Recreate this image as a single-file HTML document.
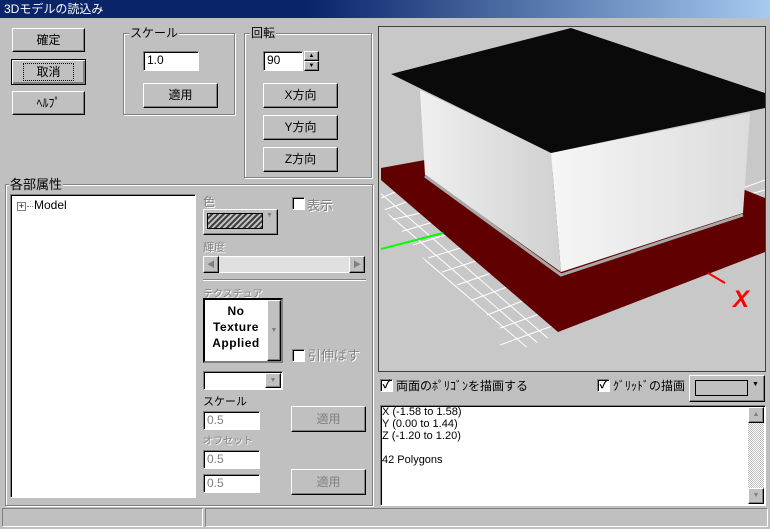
<!DOCTYPE html>
<html><head><meta charset="utf-8"><style>
*{box-sizing:border-box;margin:0;padding:0}
body{width:770px;height:529px;background:#c0c0c0;font-family:"Liberation Sans","Noto Sans CJK JP",sans-serif;font-size:12px;position:relative;overflow:hidden;color:#000}
.a{position:absolute}
.btn{position:absolute;background:#c0c0c0;border:1px solid;border-color:#fff #000 #000 #fff;box-shadow:inset -1px -1px #808080;text-align:center;font-size:12px}
.edit{position:absolute;background:#fff;border:1px solid;border-color:#808080 #fff #fff #808080;box-shadow:inset 1px 1px #000;padding-left:3px;font-size:12px;line-height:17px}
.grp{position:absolute;border:1px solid #808080;box-shadow:1px 1px #fff, inset 1px 1px #fff}
.lbl{position:absolute;background:#c0c0c0;font-size:12px;line-height:13px;padding:0 1px}
.dis{color:#808080;text-shadow:1px 1px #fff}
.cb{position:absolute;width:13px;height:13px;background:#fff;border:1px solid;border-color:#808080 #fff #fff #808080;box-shadow:inset 1px 1px #000;font-size:11px;line-height:10px;text-align:center;font-weight:bold}
</style></head><body>
<div class="a" style="left:0;top:0;width:770px;height:18px;background:linear-gradient(90deg,#0a246a,#0a246a 40%,#a6caf0);color:#fff;font-size:12px;line-height:18px;padding-left:4px">3Dモデルの読込み</div>

<div class="btn" style="left:12px;top:28px;width:73px;height:24px;line-height:22px">確定</div>
<div class="btn" style="left:11px;top:59px;width:75px;height:26px;line-height:24px;border:1px solid #000;box-shadow:inset 1px 1px #fff,inset -2px -2px #808080"><span style="border:1px dotted #000;padding:1px 12px">取消</span></div>
<div class="btn" style="left:12px;top:91px;width:73px;height:24px;line-height:22px">ﾍﾙﾌﾟ</div>

<div class="grp" style="left:123px;top:33px;width:112px;height:82px"></div>
<div class="lbl" style="left:129px;top:27px">スケール</div>
<div class="edit" style="left:143px;top:51px;width:56px;height:20px">1.0</div>
<div class="btn" style="left:143px;top:83px;width:75px;height:25px;line-height:23px">適用</div>

<div class="grp" style="left:244px;top:33px;width:128px;height:145px"></div>
<div class="lbl" style="left:250px;top:27px">回転</div>
<div class="edit" style="left:263px;top:51px;width:40px;height:20px">90</div>
<div class="btn" style="left:304px;top:51px;width:15px;height:10px;font-size:6px;line-height:8px">▲</div>
<div class="btn" style="left:304px;top:61px;width:15px;height:10px;font-size:6px;line-height:8px">▼</div>
<div class="btn" style="left:263px;top:83px;width:75px;height:25px;line-height:23px">X方向</div>
<div class="btn" style="left:263px;top:115px;width:75px;height:25px;line-height:23px">Y方向</div>
<div class="btn" style="left:263px;top:147px;width:75px;height:25px;line-height:23px">Z方向</div>

<div class="grp" style="left:5px;top:184px;width:368px;height:322px"></div>
<div class="lbl" style="left:9px;top:178px;font-size:13px">各部属性</div>
<div class="edit" style="left:10px;top:194px;width:186px;height:304px;padding:0"></div>
<div class="a" style="left:17px;top:202px;width:9px;height:9px;border:1px solid #808080;background:#fff;font-size:9px;line-height:7px;text-align:center">+</div>
<div class="a" style="left:27px;top:206px;width:6px;border-top:1px dotted #808080"></div>
<div class="a" style="left:34px;top:198px;font-size:12px">Model</div>

<div class="a dis" style="left:203px;top:193px">色</div>
<div class="btn" style="left:203px;top:209px;width:75px;height:26px;border-color:#fff #000 #000 #fff"></div>
<div class="a" style="left:207px;top:213px;width:56px;height:16px;border:1px solid #000;background:repeating-linear-gradient(-45deg,#404040 0 2px,#c0c0c0 2px 4px)"></div>
<div class="a" style="left:266px;top:212px;font-size:7px;color:#808080">▼</div>
<div class="cb" style="left:292px;top:197px"></div>
<div class="a dis" style="left:307px;top:195px;font-size:13px">表示</div>
<div class="a dis" style="left:203px;top:239px;font-size:11px">輝度</div>
<div class="a" style="left:203px;top:256px;width:162px;height:17px;background:#e0e0e0;border:1px solid #fff"></div>
<div class="btn" style="left:203px;top:256px;width:16px;height:17px;font-size:8px;line-height:15px;color:#808080">◀</div>
<div class="btn" style="left:349px;top:256px;width:16px;height:17px;font-size:8px;line-height:15px;color:#808080">▶</div>
<div class="a" style="left:203px;top:279px;width:163px;border-top:1px solid #808080;border-bottom:1px solid #fff"></div>
<div class="a dis" style="left:203px;top:285px;font-size:10px">テクスチュア</div>
<div class="a" style="left:203px;top:298px;width:80px;height:65px;border:2px solid #000;border-right-color:#808080;border-bottom-color:#808080;background:#fff"></div>
<div class="btn" style="left:267px;top:300px;width:14px;height:61px;font-size:7px;line-height:59px;color:#808080">▼</div>
<div class="a" style="left:205px;top:303px;width:62px;text-align:center;font-weight:bold;font-size:12px;line-height:16px;letter-spacing:0.5px">No<br>Texture<br>Applied</div>
<div class="cb" style="left:292px;top:349px"></div>
<div class="a dis" style="left:308px;top:345px;font-size:13px">引伸ばす</div>
<div class="edit" style="left:203px;top:371px;width:80px;height:19px"></div>
<div class="btn" style="left:265px;top:373px;width:16px;height:15px;font-size:7px;line-height:13px;color:#808080">▼</div>
<div class="a" style="left:203px;top:393px;font-size:11px">スケール</div>
<div class="edit" style="left:203px;top:411px;width:57px;height:19px;color:#808080">0.5</div>
<div class="btn" style="left:291px;top:406px;width:75px;height:26px;line-height:24px;color:#808080">適用</div>
<div class="a dis" style="left:203px;top:432px;font-size:10px">オフセット</div>
<div class="edit" style="left:203px;top:450px;width:57px;height:19px;color:#808080">0.5</div>
<div class="edit" style="left:203px;top:474px;width:57px;height:19px;color:#808080">0.5</div>
<div class="btn" style="left:291px;top:469px;width:75px;height:26px;line-height:24px;color:#808080">適用</div>

<svg class="a" style="left:0;top:0" width="770" height="529">
<defs>
<clipPath id="g"><polygon points="381,175 560,333 502,358 381,205"/></clipPath>
<linearGradient id="lw" x1="0" y1="0" x2="1" y2="0"><stop offset="0" stop-color="#f0f0f0"/><stop offset="1" stop-color="#d0d0d0"/></linearGradient>
<linearGradient id="rw" x1="0" y1="0" x2="1" y2="0"><stop offset="0" stop-color="#f6f6f6"/><stop offset="1" stop-color="#dcdcdc"/></linearGradient>
</defs>
<rect x="378.5" y="26.5" width="387" height="345" fill="#c8c8c8" stroke="#404040"/>
<g stroke="#fff" stroke-width="1" fill="none" clip-path="url(#g)">
<path d="M371,185 L550,340 M366,195 L540,345 M361,205 L530,350"/>
<path d="M381,198 L400,190 M381,211 L412,200 M390,220 L425,212 M400,232 L440,220 M413,245 L455,232 M428,258 L470,245 M442,272 L485,258 M457,285 L500,270 M472,300 L515,284 M487,315 L530,298 M500,328 L545,312 M500,345 L555,325"/>
</g>
<g stroke="#fff" fill="none"><path d="M743,188 L765,180 M743,196 L765,190"/></g>
<polygon points="381,168 425,160 745,190 765,198 765,252 558,332 381,180" fill="#600000"/>
<polygon points="420,90 551,153 561,272 425,175" fill="url(#lw)"/>
<polygon points="551,153 750,113 743,213 561,272" fill="url(#rw)"/>
<polyline points="425,176 561,275 743,215" fill="none" stroke="#a8a8a8" stroke-width="3"/>
<polygon points="391,74 571,28 765,93 765,108 551,153" fill="#0a0a0a"/>
<line x1="381" y1="249" x2="443" y2="233" stroke="#00ff00" stroke-width="2"/>
<line x1="708" y1="273" x2="725" y2="283" stroke="#f00" stroke-width="2"/>
<text x="733" y="307" fill="#f00" font-size="24" font-weight="bold" font-style="italic" font-family="Liberation Sans">X</text>
</svg>

<div class="cb" style="left:380px;top:379px">✓</div>
<div class="a" style="left:396px;top:377px;font-size:12px">両面のﾎﾟﾘｺﾞﾝを描画する</div>
<div class="cb" style="left:597px;top:379px">✓</div>
<div class="a" style="left:613px;top:377px;font-size:12px">ｸﾞﾘｯﾄﾞの描画</div>
<div class="btn" style="left:689px;top:375px;width:76px;height:27px"></div>
<div class="a" style="left:695px;top:380px;width:53px;height:16px;border:1px solid #000"></div>
<div class="a" style="left:752px;top:381px;font-size:7px">▼</div>
<div class="edit" style="left:380px;top:405px;width:386px;height:101px;padding:0"></div>
<div class="a" style="left:382px;top:406px;font-size:11px;line-height:12px">X (-1.58 to 1.58)<br>Y (0.00 to 1.44)<br>Z (-1.20 to 1.20)<br><br>42 Polygons</div>
<div class="a" style="left:748px;top:407px;width:16px;height:97px;background:repeating-conic-gradient(#c0c0c0 0 25%,#fff 0 50%) 0 0/2px 2px"></div>
<div class="btn" style="left:748px;top:407px;width:16px;height:16px;font-size:7px;line-height:14px;color:#808080">▲</div>
<div class="btn" style="left:748px;top:488px;width:16px;height:16px;font-size:7px;line-height:14px;color:#808080">▼</div>

<div class="a" style="left:2px;top:508px;width:201px;height:19px;border:1px solid;border-color:#808080 #fff #fff #808080"></div>
<div class="a" style="left:205px;top:508px;width:563px;height:19px;border:1px solid;border-color:#808080 #fff #fff #808080"></div>
</body></html>
